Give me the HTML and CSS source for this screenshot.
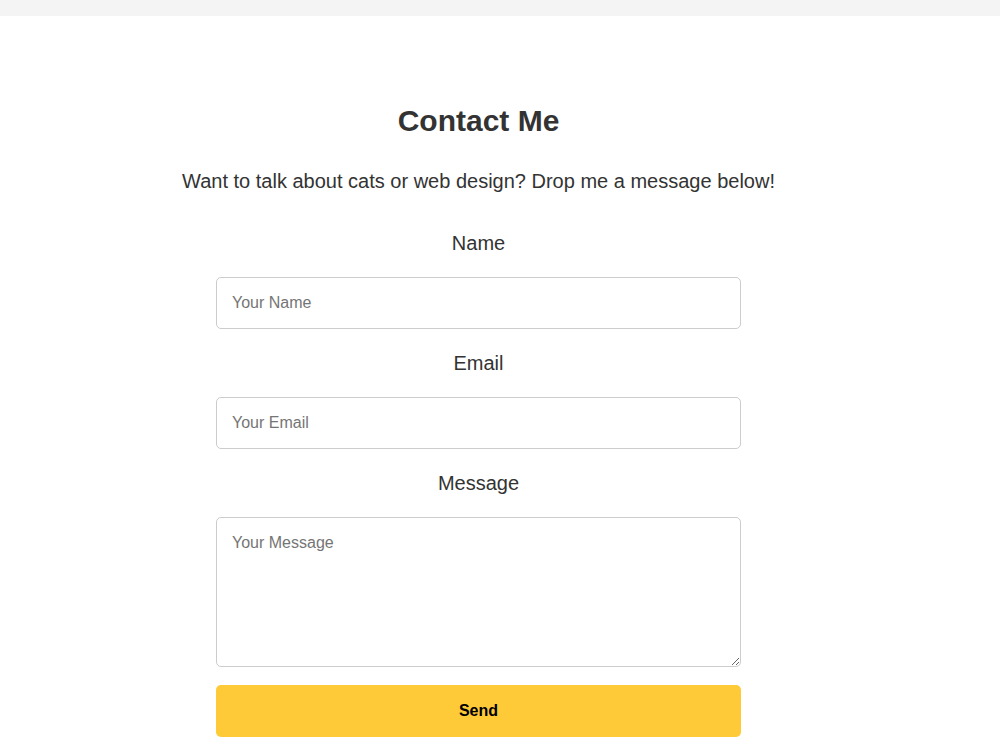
FILE: index.html
```html
<!DOCTYPE html>
<html lang="en">
<head>
<meta charset="utf-8">
<title>Contact Me</title>
<link rel="stylesheet" href="styles.css">
</head>
<body>
<section class="contact">
  <h1 class="contact-title">Contact Me</h1>
  <p class="contact-intro">Want to talk about cats or web design? Drop me a message below!</p>
  <form class="contact-form">
    <label class="field-label" for="name">Name</label>
    <input class="field-input" type="text" id="name" placeholder="Your Name">
    <label class="field-label" for="email">Email</label>
    <input class="field-input" type="email" id="email" placeholder="Your Email">
    <label class="field-label" for="message">Message</label>
    <textarea class="field-input field-textarea" id="message" placeholder="Your Message"></textarea>
    <button class="send-btn" type="submit">Send</button>
  </form>
</section>
</body>
</html>
```
FILE: styles.css
```css
html, body {
  margin: 0;
  padding: 0;
}
body {
  background: #f4f4f4;
  font-family: "Liberation Sans", Arial, sans-serif;
  color: #333;
}
.contact {
  margin-top: 16px;
  background: #fff;
  min-height: 734px;
  padding: 88px 43px 40px 0;
  box-sizing: border-box;
  display: flex;
  flex-direction: column;
  align-items: center;
}
.contact-title {
  margin: 0 0 32px;
  font-size: 30px;
  font-weight: bold;
  line-height: 34px;
  color: #333;
}
.contact-intro {
  margin: 0 0 38px;
  font-size: 20px;
  line-height: 23px;
}
.contact-form {
  width: 525px;
  display: flex;
  flex-direction: column;
}
.field-label {
  display: block;
  text-align: center;
  font-size: 20px;
  line-height: 24px;
  margin: 0 0 22px;
}
.field-input {
  box-sizing: border-box;
  width: 100%;
  height: 52px;
  padding: 15px;
  border: 1px solid #ccc;
  border-radius: 5px;
  font-family: "Liberation Sans", Arial, sans-serif;
  font-size: 16px;
  color: #333;
  margin: 0 0 22px;
  background: #fff;
}
.field-input::placeholder {
  color: #757575;
}
.field-textarea {
  height: 150px;
  padding-top: 16px;
  resize: vertical;
  margin-bottom: 18px;
}
.send-btn {
  height: 52px;
  border: none;
  border-radius: 5px;
  background: #ffca38;
  color: #000;
  font-family: "Liberation Sans", Arial, sans-serif;
  font-size: 16px;
  font-weight: bold;
  cursor: pointer;
}
```
